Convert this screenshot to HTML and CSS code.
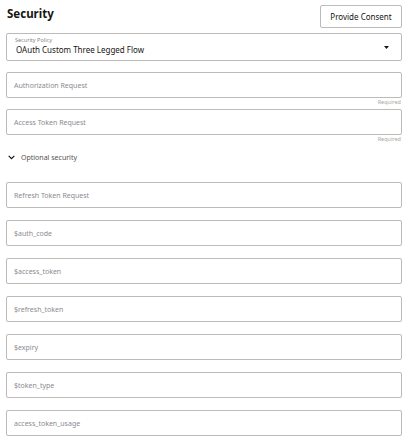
FILE: index.html
```html
<!DOCTYPE html>
<html>
<head>
<meta charset="utf-8">
<link rel="stylesheet" href="styles.css">
</head>
<body>
<div class="page">
  <div class="header">
    <h1 class="title">Security</h1>
    <button class="btn">Provide Consent</button>
  </div>
  <div class="select">
    <div class="select-label">Security Policy</div>
    <div class="select-value">OAuth Custom Three Legged Flow</div>
    <svg class="caret" width="5" height="3" viewBox="0 0 5 3"><path d="M0 0H5L2.5 3Z" fill="#161513"/></svg>
  </div>
  <div class="field req">
    <div class="input"><span class="ph">Authorization Request</span></div>
    <div class="help">Required</div>
  </div>
  <div class="field req">
    <div class="input"><span class="ph">Access Token Request</span></div>
    <div class="help">Required</div>
  </div>
  <div class="toggle">
    <svg class="chev" width="7" height="5" viewBox="0 0 7 5"><path d="M0.7 0.8L3.5 3.6L6.3 0.8" fill="none" stroke="#161513" stroke-width="1.2"/></svg>
    <span>Optional security</span>
  </div>
  <div class="optional">
    <div class="input"><span class="ph">Refresh Token Request</span></div>
    <div class="input"><span class="ph">$auth_code</span></div>
    <div class="input"><span class="ph">$access_token</span></div>
    <div class="input"><span class="ph">$refresh_token</span></div>
    <div class="input"><span class="ph">$expiry</span></div>
    <div class="input"><span class="ph">$token_type</span></div>
    <div class="input"><span class="ph">access_token_usage</span></div>
  </div>
</div>
</body>
</html>
```
FILE: styles.css
```css
html, body { margin: 0; padding: 0; background: #fff; }
body { font-family: "Noto Sans", "Open Sans", sans-serif; color: #161513; }
.page { width: 396px; padding: 5px 12px 0 6px; }
.header { display: flex; justify-content: space-between; align-items: flex-start; height: 28px; }
.title { margin: 0; padding: 1px 0 0 1px; font-size: 11.5px; font-weight: 700; line-height: 16px; }
.btn { height: 23px; width: 82px; padding: 0; border: 1px solid #bcbbb9; border-radius: 2px; background: #fff; font-family: inherit; font-size: 8px; color: #161513; }
.select { position: relative; box-sizing: border-box; height: 28px; border: 1px solid #bcbbb9; border-radius: 2px; padding: 3px 0 0 8px; }
.select-label { font-size: 5.5px; color: #8a8886; line-height: 7px; }
.select-value { font-size: 8px; line-height: 12px; margin-left: 1px; }
.caret { position: absolute; right: 12px; top: 12px; }
.field { margin-top: 11px; }
.field.req + .field.req { margin-top: 3px; }
.input { box-sizing: border-box; height: 26px; border: 1px solid #bcbbb9; border-radius: 2px; display: flex; align-items: center; padding-left: 7px; }
.ph { font-size: 7px; color: #8b8a90; }
.help { text-align: right; font-size: 5.5px; color: #aaa8a5; line-height: 7px; margin-top: 1px; padding-right: 1px; }
.toggle { display: flex; align-items: center; height: 12px; margin-top: 8px; padding-left: 2px; font-size: 7px; color: #55534f; }
.chev { margin-right: 6px; }
.optional { display: flex; flex-direction: column; gap: 12px; margin-top: 19px; }
```
